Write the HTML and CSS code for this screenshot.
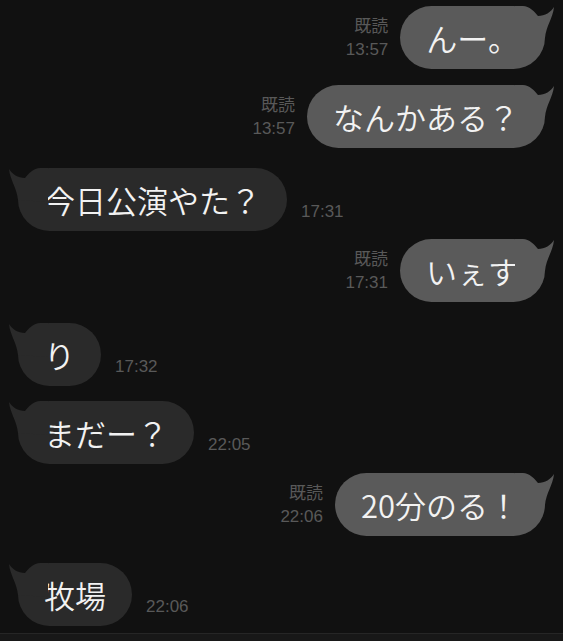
FILE: index.html
```html
<!DOCTYPE html>
<html lang="ja">
<head>
    <meta charset="UTF-8">
    <meta name="viewport" content="width=device-width, initial-scale=1.0">
    <title>トーク</title>
    <link rel="stylesheet" href="styles.css">
</head>
<body>
    <div class="talk">
        <div class="row sent">
            <div class="meta"><span>既読</span><span>13:57</span></div>
            <div class="bubble">んー。<svg class="tail" viewBox="0 0 40 34"><path d="M0 0 L8 0 C14 0 20 6 23 10 C30 10 36 6 39 1 C38 12 31 20 30 32 L0 34 Z"/></svg></div>
        </div>
        <div class="row sent gap-16">
            <div class="meta"><span>既読</span><span>13:57</span></div>
            <div class="bubble">なんかある？<svg class="tail" viewBox="0 0 40 34"><path d="M0 0 L8 0 C14 0 20 6 23 10 C30 10 36 6 39 1 C38 12 31 20 30 32 L0 34 Z"/></svg></div>
        </div>
        <div class="row recv gap-20">
            <div class="bubble">今日公演やた？<svg class="tail" viewBox="0 0 40 34"><path d="M0 0 L8 0 C14 0 20 6 23 10 C30 10 36 6 39 1 C38 12 31 20 30 32 L0 34 Z"/></svg></div>
            <div class="meta"><span>17:31</span></div>
        </div>
        <div class="row sent gap-8">
            <div class="meta"><span>既読</span><span>17:31</span></div>
            <div class="bubble">いぇす<svg class="tail" viewBox="0 0 40 34"><path d="M0 0 L8 0 C14 0 20 6 23 10 C30 10 36 6 39 1 C38 12 31 20 30 32 L0 34 Z"/></svg></div>
        </div>
        <div class="row recv gap-21">
            <div class="bubble">り<svg class="tail" viewBox="0 0 40 34"><path d="M0 0 L8 0 C14 0 20 6 23 10 C30 10 36 6 39 1 C38 12 31 20 30 32 L0 34 Z"/></svg></div>
            <div class="meta"><span>17:32</span></div>
        </div>
        <div class="row recv gap-15">
            <div class="bubble">まだー？<svg class="tail" viewBox="0 0 40 34"><path d="M0 0 L8 0 C14 0 20 6 23 10 C30 10 36 6 39 1 C38 12 31 20 30 32 L0 34 Z"/></svg></div>
            <div class="meta"><span>22:05</span></div>
        </div>
        <div class="row sent gap-9">
            <div class="meta"><span>既読</span><span>22:06</span></div>
            <div class="bubble">20分のる！<svg class="tail" viewBox="0 0 40 34"><path d="M0 0 L8 0 C14 0 20 6 23 10 C30 10 36 6 39 1 C38 12 31 20 30 32 L0 34 Z"/></svg></div>
        </div>
        <div class="row recv gap-27">
            <div class="bubble">牧場<svg class="tail" viewBox="0 0 40 34"><path d="M0 0 L8 0 C14 0 20 6 23 10 C30 10 36 6 39 1 C38 12 31 20 30 32 L0 34 Z"/></svg></div>
            <div class="meta"><span>22:06</span></div>
        </div>
    </div>
    <div class="bottom"></div>
</body>
</html>
```
FILE: styles.css
```css
body {
    margin: 0;
    background-color: #111111;
    font-family: "Liberation Sans", "Noto Sans CJK JP", sans-serif;
    height: 641px;
    overflow: hidden;
    display: flex;
    flex-direction: column;
}
.talk {
    flex: 1;
    padding-top: 6px;
}
.row {
    display: flex;
    align-items: flex-end;
}
.row.sent {
    justify-content: flex-end;
    padding-right: 18px;
}
.row.recv {
    padding-left: 18px;
}
.gap-8 { margin-top: 8px; }
.gap-9 { margin-top: 9px; }
.gap-15 { margin-top: 15px; }
.gap-16 { margin-top: 16px; }
.gap-20 { margin-top: 20px; }
.gap-21 { margin-top: 21px; }
.gap-27 { margin-top: 27px; }
.bubble {
    position: relative;
    height: 63px;
    line-height: 63px;
    padding: 0 26px;
    border-radius: 32px;
    font-family: "Noto Sans CJK JP", sans-serif;
    font-weight: 350;
    font-size: 31px;
    color: #f2f2f2;
    white-space: nowrap;
}
.sent .bubble {
    background-color: #5a5a5a;
}
.recv .bubble {
    background-color: #2a2a2a;
}
.tail {
    position: absolute;
    top: 0;
    width: 40px;
    height: 34px;
}
.sent .tail {
    right: -10px;
    fill: #5a5a5a;
}
.recv .tail {
    left: -10px;
    fill: #2a2a2a;
    transform: scaleX(-1);
}
.meta {
    display: flex;
    flex-direction: column;
    font-size: 17px;
    line-height: 23px;
    color: #595959;
    margin-bottom: 8px;
}
.sent .meta {
    align-items: flex-end;
    margin-right: 12px;
}
.recv .meta {
    margin-left: 14px;
}
.bottom {
    height: 7px;
    border-top: 1px solid #262626;
    background-color: #181818;
}
```
